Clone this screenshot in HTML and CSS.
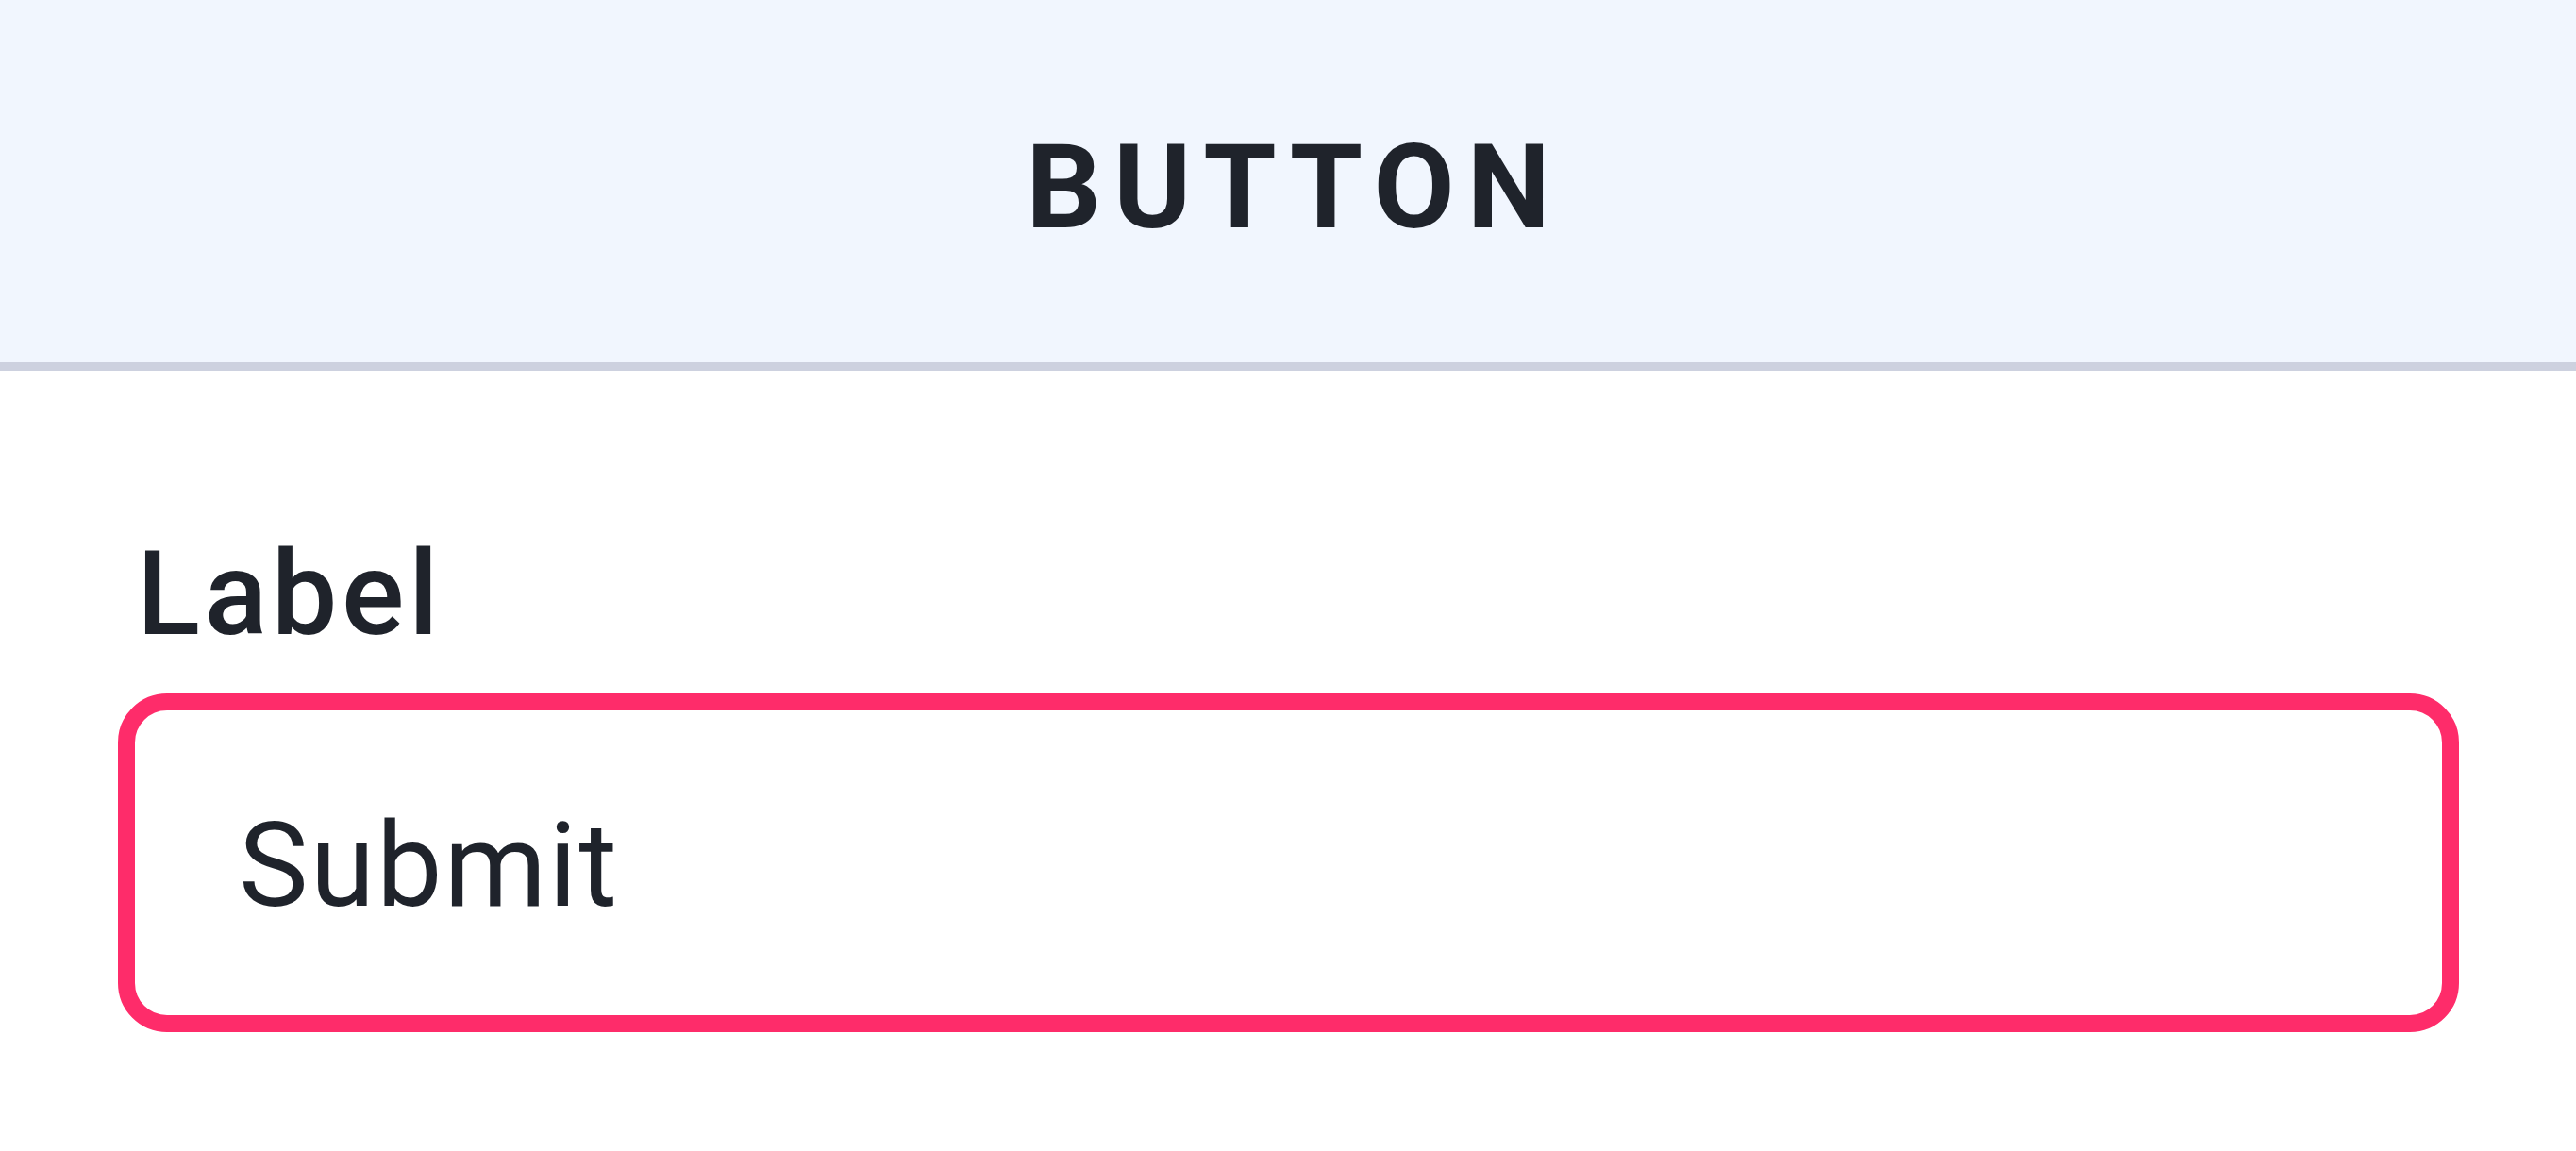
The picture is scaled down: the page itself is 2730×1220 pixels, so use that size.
FILE: index.html
```html
<!doctype html>
<html lang="en">
<head>
	<meta charset="UTF-8">
	<title>Button</title>
	<link rel="stylesheet" href="styles.css">
</head>
<body>
	<div class="header">
		<h1 class="title">BUTTON</h1>
	</div>
	<div class="content">
		<label class="field-label" for="submit">Label</label>
		<input class="field-input" id="submit" type="text" value="Submit">
	</div>
</body>
</html>
```

FILE: styles.css
```css
body{
	margin: 0;
	background: #ffffff;
	color: #1f232b;
	font-family: Roboto, "Liberation Sans", sans-serif;
}
.header{
	height: 372px;
	background: #f1f6fe;
	border-bottom: 9px solid #cdd1df;
	display: flex;
	align-items: center;
	justify-content: center;
	padding: 12px 0 0 13px;
}
.title{
	margin: 0;
	font-size: 125px;
	font-weight: 700;
	line-height: 1;
	letter-spacing: 13px;
}
.content{
	padding: 175px 124px 0 125px;
	display: flex;
	flex-direction: column;
	gap: 43px;
}
.field-label{
	margin-left: 20px;
	font-size: 124px;
	font-weight: 500;
	line-height: 1;
	letter-spacing: 4.5px;
}
.field-input{
	width: 100%;
	height: 359px;
	box-sizing: border-box;
	border: 18px solid #fe2c6a;
	border-radius: 52px;
	padding: 6px 100px 0 110px;
	font-family: Roboto, "Liberation Sans", sans-serif;
	font-size: 124px;
	font-weight: 400;
	letter-spacing: 2px;
	color: #1f232b;
	background: #ffffff;
	outline: none;
}
```
